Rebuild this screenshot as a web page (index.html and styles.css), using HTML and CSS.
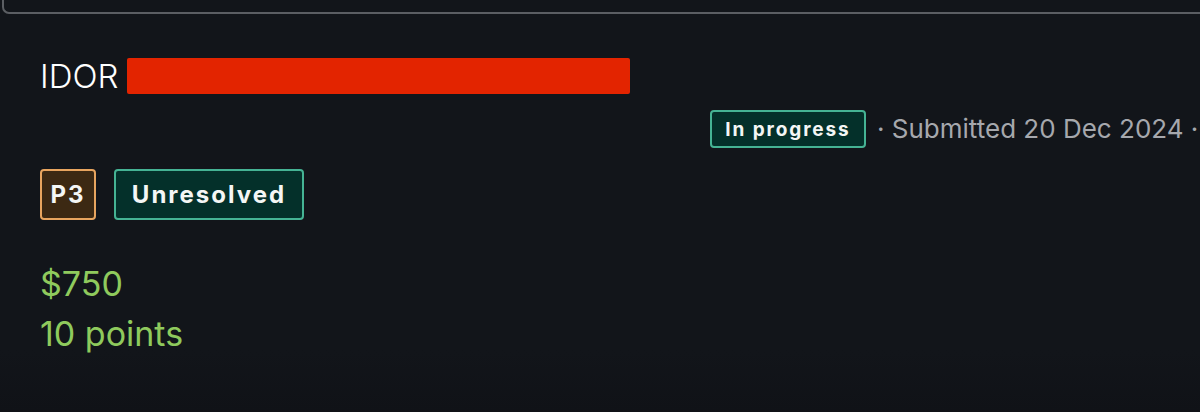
FILE: index.html
```html
<!DOCTYPE html>
<html>
<head>
<meta charset="utf-8">
<link rel="stylesheet" href="styles.css">
</head>
<body>
<div class="page">
  <div class="prev-card"></div>
  <div class="report">
    <h1 class="title">IDOR <span class="redact"></span></h1>
    <div class="meta">
      <span class="badge badge-teal badge-sm">In progress</span>
      <span class="meta-text">· Submitted 20 Dec 2024 · </span>
    </div>
    <div class="tags">
      <span class="badge badge-orange">P3</span>
      <span class="badge badge-teal">Unresolved</span>
    </div>
    <div class="reward">$750</div>
    <div class="reward points">10 points</div>
  </div>
</div>
</body>
</html>
```
FILE: styles.css
```css
html, body {
  margin: 0;
  padding: 0;
  background: #12151a;
  overflow: hidden;
}
.page {
  width: 1200px;
  height: 412px;
  background: linear-gradient(#12151a 0%, #12151a 85%, #101217 100%);
  font-family: Inter, "Noto Sans", sans-serif;
  color: #ffffff;
  overflow: hidden;
}
.prev-card {
  margin-left: 2px;
  height: 12px;
  border-left: 2px solid #5b5e63;
  border-bottom: 2px solid #5b5e63;
  border-bottom-left-radius: 7px;
}
.report {
  padding-left: 40px;
}
.title {
  margin: 42px 0 0 0;
  font-size: 33px;
  line-height: 40px;
  font-weight: 300;
  display: flex;
  align-items: center;
  gap: 9px;
}
.redact {
  display: inline-block;
  width: 503px;
  height: 36px;
  background: #e32400;
  border-radius: 2px;
}
.meta {
  margin-top: 14px;
  margin-left: 670px;
  display: flex;
  align-items: center;
  white-space: nowrap;
  gap: 11px;
}
.meta-text {
  color: #a6a8ad;
  font-size: 26px;
  line-height: 38px;
}
.badge {
  display: inline-flex;
  align-items: center;
  justify-content: center;
  box-sizing: border-box;
  font-weight: 700;
  color: #f4f6f5;
  border-radius: 4px;
  border: 2px solid;
}
.badge-sm {
  height: 38px;
  width: 156px;
  padding: 0;
  font-size: 19px;
  letter-spacing: 1.9px;
}
.badge-teal {
  background: #04302a;
  border-color: #45b394;
}
.badge-orange {
  background: #3c2913;
  border-color: #e8a55f;
}
.tags {
  margin-top: 21px;
  display: flex;
  gap: 18px;
}
.tags .badge {
  height: 51px;
  font-size: 24px;
  letter-spacing: 2px;
  padding: 0;
  width: 190px;
}
.tags .badge-orange {
  width: 56px;
}
.reward {
  color: #8fca5d;
  font-size: 34px;
  line-height: 42px;
  margin-top: 43px;
}
.reward.points {
  margin-top: 8px;
}
```
